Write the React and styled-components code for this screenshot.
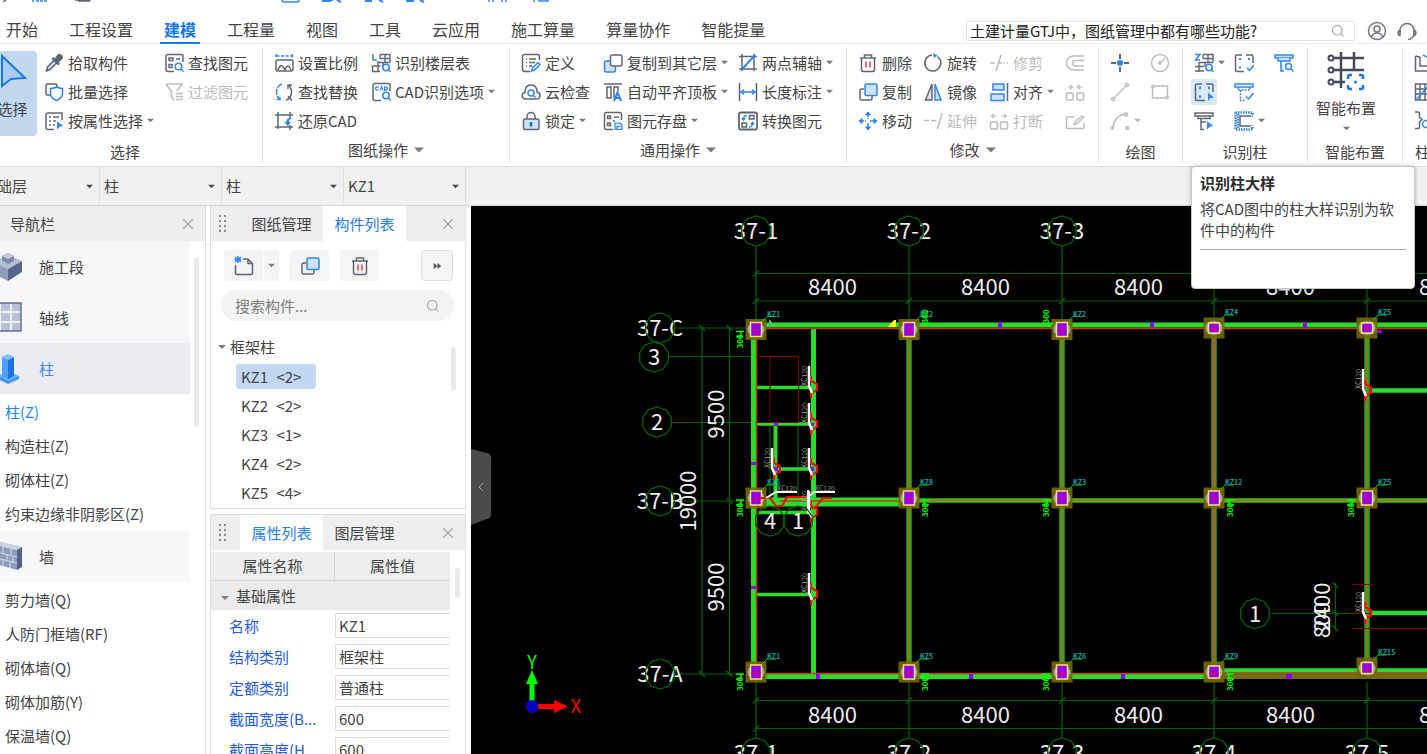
import React, { useState } from "react";
import styled, { createGlobalStyle } from "styled-components";

const GRAY = "#5d6675";
const BLUE = "#2f86f0";
const PALE = "#cfe1f8";
const OFF = "#bcbcbc";

const icons = {
  dropper: (
    <>
      <path d="M2.500 18l1-4 7-7 2.500 2.500-7 7z" fill="#cfe1f8" stroke={GRAY} />
      <path d="M8.500 5l6.500 6.500" stroke={GRAY} strokeWidth="2.500" />
      <path d="M11 7l3-4.500c1.500-2 5 1 3.500 3L13.500 9z" fill={GRAY} stroke={GRAY} strokeWidth="2" />
    </>
  ),
  batch: (
    <>
      <path d="M7 13H3.500A1.500 1.500 0 0 1 2 11.500v-8A1.500 1.500 0 0 1 3.500 2h8A1.500 1.500 0 0 1 13 3.500V5" stroke={GRAY} />
      <path d="M6.500 6.500c3 0 4-.5 6-1.500 2 1 3 1.500 6 1.500v5c0 3.500-2.500 5.500-6 7-3.500-1.500-6-3.500-6-7z" fill="#fff" stroke={BLUE} />
    </>
  ),
  byProp: (
    <>
      <path d="M10 18.500H4A2 2 0 0 1 2 16.500v-13A2 2 0 0 1 4 2h14v7" stroke={GRAY} />
      <path d="M5 6h2M9 6h6M5 10h2M9 10h3M5 14h2M9 14h2" stroke={GRAY} />
      <path d="M13 10.500l6.500 4.500-3.500.5-3 3z" fill={BLUE} />
    </>
  ),
  findEl: (
    <>
      <path d="M10 18.500H4A2 2 0 0 1 2 16.500v-13A2 2 0 0 1 4 1.500h13a2 2 0 0 1 2 2V9" stroke={GRAY} />
      <path d="M5 5h4v2.500H5zM5 11.500h3v3H5zM12 6h4" stroke={GRAY} />
      <circle cx="14.500" cy="13.500" r="3.300" stroke={BLUE} />
      <path d="M17 16l2.500 2.500" stroke={BLUE} />
    </>
  ),
  filter: (
    <>
      <path d="M2 2h16l-5.500 7M2 2l5.500 7.500v6L10 18" stroke={OFF} />
      <path d="M12 11.500h7M12 14.500h7M12 17.500h7" stroke={OFF} />
    </>
  ),
  scale: (
    <>
      <path d="M2 1v4M18.500 1v4M2.500 3h15.500" stroke={BLUE} strokeDasharray="3 1.500" />
      <rect x="2" y="7" width="17" height="11" rx="2" stroke={GRAY} />
      <path d="M4 17c1-3 2-4.500 3.500-4.500S9.500 15 11 17c1-3 1.500-4 3-4s2 2 3 4" stroke={GRAY} />
    </>
  ),
  replace: (
    <>
      <path d="M8 2C1.500 4 1 12 5 16.500M2.500 17.500H6V13.500" stroke={BLUE} strokeDasharray="6 1.200" />
      <path d="M12 18c6.500-2 7-10 3-14.500M18 3h-4v4M14 14l4 4.500" stroke={GRAY} />
    </>
  ),
  restore: (
    <>
      <path d="M1 4h18M4 1v17M16 1v7M1 16h18M16 14v5" stroke={GRAY} />
      <path d="M18 7c-5 0-6 2-5.500 4H10l4 4 3-4h-2c0-2 1-3 3-4z" fill={BLUE} />
    </>
  ),
  floorTable: (
    <>
      <path d="M2 1v6h4" stroke={BLUE} />
      <path d="M9 1.500h10v8M9 1.500v4M14 1.500v8M9 5.500h10M7 9.500h12M7 8v10.500M12 9.500v4M1.500 13h8M1.500 13v5.500H9" stroke={GRAY} strokeWidth="1.400" />
      <circle cx="15" cy="14.500" r="3.200" fill="#fff" stroke={BLUE} />
      <path d="M17.500 17l2 2" stroke={BLUE} />
    </>
  ),
  cadOpt: (
    <>
      <path d="M10 18.500H4A2 2 0 0 1 2 16.500v-13A2 2 0 0 1 4 1.500h14a1 1 0 0 1 1 1V9" stroke={GRAY} />
      <path d="M7.500 5.500C6 4.500 4.500 5 4.500 6.500S6 8.500 7.500 7.500M9 8.500l1.500-4 1.500 4M13.500 4.800v3.500c2.500 0 3-.5 3-1.700s-.5-1.800-3-1.800z" stroke={BLUE} strokeWidth="1.200" />
      <circle cx="15" cy="13.500" r="3.200" stroke={BLUE} />
      <path d="M17.500 16l2 2.500" stroke={BLUE} />
    </>
  ),
  define: (
    <>
      <path d="M9 18.500H3.500a2 2 0 0 1-2-2v-13a2 2 0 0 1 2-2h13a2 2 0 0 1 2 2V7" stroke={GRAY} />
      <path d="M5 6h1M8 6h7M5 9.500h1M8 9.500h6M5 13h1M8 13h3" stroke={GRAY} />
      <path d="M10.500 18l1-3 5.500-5.500 2 2-5.500 5.500z" fill="#fff" stroke={BLUE} />
    </>
  ),
  cloud: (
    <>
      <path d="M4.500 17C.5 17 0 11 4 10.500 4 5 6.500 3 10 3s6 2.500 6 7c4 .5 4 7-.5 7z" stroke={GRAY} />
      <circle cx="10" cy="11" r="3" stroke={BLUE} />
      <path d="M12 13l2.500 2.500" stroke={BLUE} />
    </>
  ),
  lock: (
    <>
      <path d="M6 8V5.500a4 4 0 0 1 8 0V8" stroke={GRAY} />
      <rect x="2.500" y="8" width="15.500" height="10.500" rx="1.500" fill={PALE} stroke={GRAY} />
      <path d="M10 11v4.500" stroke="#1469d8" strokeWidth="2.500" />
    </>
  ),
  copyLayer: (
    <>
      <rect x="1.500" y="8" width="11" height="11" rx="2" fill={PALE} stroke={BLUE} />
      <rect x="7.500" y="2" width="11.500" height="11" rx="2" fill="#fff" stroke={GRAY} />
    </>
  ),
  alignTop: (
    <>
      <path d="M1 2h18M4 5h4v11H4zM11 16V5h4v4" stroke={GRAY} />
      <path d="M11 19l3.500-8.500L18 19M12.500 16h4" stroke={BLUE} strokeWidth="2" />
    </>
  ),
  saveEl: (
    <>
      <path d="M10 18.500H3.500a2 2 0 0 1-2-2v-13a2 2 0 0 1 2-2h13a2 2 0 0 1 2 2V9" stroke={GRAY} />
      <path d="M4.500 5h3v2.500h-3zM4.500 12h3v2.500h-3zM11 6h5M10 10h2" stroke={GRAY} />
      <path d="M12 12h5l2 2v4.500h-7zM14 18v-2.500h3" fill={PALE} stroke={BLUE} strokeWidth="1.200" />
    </>
  ),
  twoPoint: (
    <>
      <path d="M1 3.500h18M4 1v17M16 1v17M1 16h18" stroke={GRAY} />
      <path d="M3 17.500L17 2" stroke={BLUE} strokeWidth="2" />
    </>
  ),
  length: (
    <>
      <path d="M1.500 1v18M18.500 1v18" stroke={GRAY} />
      <path d="M3.500 10h13M6 7.500L3 10l3 2.500M14 7.500l3 2.500-3 2.500" stroke={BLUE} />
    </>
  ),
  convert: (
    <>
      <rect x="1" y="1.500" width="18" height="17" rx="1.500" stroke={GRAY} strokeWidth="1.800" />
      <path d="M11.500 4.500H16V8h-4.500zM4 12h4.500v4H4z" stroke={GRAY} />
      <path d="M9 4.500c-3 0-3.500 1-3.500 4M3.800 7l1.700 2 1.700-2M11 16c3 0 3.500-1 3.500-4M12.800 13.500l1.700-2 1.700 2" stroke={BLUE} />
    </>
  ),
  trash: (
    <>
      <path d="M2 5h16M6.500 5V2h7v3M3.500 5v11.500a2 2 0 0 0 2 2h9a2 2 0 0 0 2-2V5" stroke={GRAY} />
      <path d="M8 8.500v6M12 8.500v6" stroke="#e23c3c" />
    </>
  ),
  copy: (
    <>
      <path d="M6 7H3.500A1.500 1.500 0 0 0 2 8.500v8A1.500 1.500 0 0 0 3.500 18h9a1.500 1.500 0 0 0 1.500-1.500V14" stroke={GRAY} />
      <rect x="7" y="2" width="12" height="11.500" rx="1.500" fill={PALE} stroke={BLUE} />
    </>
  ),
  move: (
    <g stroke={BLUE}>
      <path d="M10 2v6M10 12v6M2 10h6M12 10h6" strokeDasharray="4 1" />
      <path d="M7.500 4L10 1l2.500 3zM7.500 16l2.500 3 2.500-3zM4 7.500L1 10l3 2.500zM16 7.500l3 2.500-3 2.500z" fill={BLUE} strokeWidth="1" />
    </g>
  ),
  rotate: (
    <>
      <path d="M14.500 3.500A8 8 0 1 1 9 2" stroke={GRAY} />
      <path d="M10 0l4.500 2.500L11 5z" fill={BLUE} />
    </>
  ),
  mirror: (
    <>
      <path d="M9 2v16H2.500z" fill="#dfe2e6" stroke={GRAY} />
      <path d="M12 2v16h6z" fill={PALE} stroke={BLUE} />
    </>
  ),
  extend: <path d="M1 9.500h5M8 9.500h5M14.500 18L19 2" stroke={OFF} />,
  trim: <path d="M1 10h5M7 18l5-16M10 10h3M14.500 10h1.500M17.500 10h1.500" stroke={OFF} />,
  align: (
    <>
      <rect x="4" y="2" width="11" height="6" fill={PALE} stroke={BLUE} />
      <rect x="2" y="12" width="13" height="6.500" fill={PALE} stroke={BLUE} />
      <path d="M18.500 1v18" stroke={GRAY} />
    </>
  ),
  breakIt: (
    <g stroke={OFF}>
      <rect x="1.500" y="11" width="7" height="7" rx="1" />
      <rect x="11.500" y="11" width="7" height="7" rx="1" />
      <path d="M3 5h5M5 3L2.500 5 5 7M12 5h5M15 3l2.500 2L15 7" strokeWidth="1.200" />
    </g>
  ),
  offset: <path d="M19 3H8.500a7 7 0 0 0 0 14H19M19 7.500H9.500a3 3 0 0 0 0 5.500H19" stroke={OFF} />,
  merge: (
    <g stroke={OFF}>
      <rect x="1.500" y="11" width="6.500" height="7" rx="1" />
      <rect x="12" y="11" width="6.500" height="7" rx="1" />
      <path d="M2 5h5M5 3l2.500 2L5 7M18 5h-5M15 3l-2.500 2L15 7" strokeWidth="1.200" />
    </g>
  ),
  edit: (
    <g stroke={OFF}>
      <path d="M9 6H2.500a1 1 0 0 0-1 1v9.500a1 1 0 0 0 1 1H18a1 1 0 0 0 1-1V12" />
      <path d="M9 13.500l1.500-3L17 5l1.500 1.500-6.500 6z" />
    </g>
  ),
  point: (
    <>
      <path d="M10 1v5M10 14v5M1 10h5M14 10h5" stroke={GRAY} strokeWidth="2" />
      <circle cx="10" cy="10" r="3" fill={BLUE} />
    </>
  ),
  line: (
    <g stroke={OFF}>
      <path d="M3.500 16.500L16 4" />
      <circle cx="3" cy="17" r="1.500" />
      <circle cx="17" cy="3" r="1.500" />
    </g>
  ),
  arc: (
    <g stroke={OFF}>
      <path d="M2.500 17C4 9 8 4 15 3" />
      <circle cx="2.500" cy="17" r="1" />
      <circle cx="16" cy="3.500" r="1.500" />
      <circle cx="17" cy="17" r="1.500" />
    </g>
  ),
  circle: (
    <g stroke={OFF}>
      <circle cx="10" cy="10" r="8.500" />
      <circle cx="10" cy="10" r="1.200" />
      <path d="M11 9l4-4" />
    </g>
  ),
  rect: (
    <g stroke={OFF}>
      <rect x="2.500" y="4" width="15" height="12" />
      <circle cx="3" cy="4.500" r="1.200" fill="#fff" />
      <circle cx="17" cy="15.500" r="1.200" fill="#fff" />
    </g>
  ),
  idColumn: (
    <>
      <path d="M1 1.500h5L1.500 7H6" stroke={BLUE} />
      <path d="M9 1.500h10v8M9 1.500v4M14 1.500v8M9 5.500h10M5 9.500h14M5 9v10M11 9.500v4M1 13.500h9M1 18h9" stroke={GRAY} strokeWidth="1.400" />
      <circle cx="15" cy="14.500" r="3.200" fill="#fff" stroke={BLUE} />
      <path d="M17.500 17l2 2" stroke={BLUE} />
    </>
  ),
  detail: (
    <>
      <path d="M8 2H3a1.500 1.500 0 0 0-1.500 1.500V17A1.500 1.500 0 0 0 3 18.500h8M12 2h5.500A1.500 1.500 0 0 1 19 3.500V10" stroke={GRAY} />
      <path d="M5 6h2M14 6h2M5 14.500h2" stroke={BLUE} strokeWidth="2.500" />
      <path d="M14 10.500l6 5-3.500.500-2.500 3z" fill={BLUE} />
    </>
  ),
  frameColumn: (
    <>
      <path d="M1 2h18v3H1zM4 5v2.500h12V5M7 8v10.500h3M7 11h5" stroke={GRAY} />
      <path d="M13 10l6.500 5-3.500.5-3 3z" fill={BLUE} />
    </>
  ),
  checkBox: (
    <>
      <path d="M8 2H3a1.500 1.500 0 0 0-1.500 1.500V17A1.500 1.500 0 0 0 3 18.500h7M12 2h5.500A1.500 1.500 0 0 1 19 3.500V10" stroke={GRAY} />
      <path d="M5 6h2M14 6h2M5 14.500h2" stroke={BLUE} strokeWidth="2" />
      <path d="M13 15l2.500 2.500L20 12" stroke={BLUE} />
    </>
  ),
  checkColumn: (
    <>
      <path d="M1 2h18v3H1z" stroke={BLUE} />
      <path d="M4 5v3h12V5M6.500 8v10.500h4" stroke={BLUE} strokeDasharray="2 1.200" />
      <path d="M12 14.500l2.500 2.500 5-6" stroke={BLUE} />
    </>
  ),
  contour: (
    <>
      <path d="M1.500 1.500h17v4M1.500 1.500v17h17v-4M4 3v14" stroke={BLUE} strokeWidth="2.500" strokeDasharray="1.500 1" />
      <path d="M17 5H6v10h11" stroke={GRAY} />
    </>
  ),
  findColumn: (
    <>
      <path d="M1 2h18v3H1z" fill={PALE} stroke={BLUE} />
      <path d="M4 5v3h12V5M7 8v10h3" fill={PALE} stroke={BLUE} />
      <circle cx="14.500" cy="13.500" r="3" fill="#fff" stroke={BLUE} />
      <path d="M17 16l2.500 2.500" stroke={BLUE} />
    </>
  ),
  poly: (
    <>
      <path d="M1.500 3v15h17M6 4v9h13M1.500 3L6 4" stroke={GRAY} />
      <path d="M9 2l8 4" stroke={BLUE} />
    </>
  ),
  hatch: (
    <>
      <path d="M1.500 2h17v16h-17zM6 2v16M11 2v16M1.500 7h17M1.500 12h17M16 2v16" stroke={GRAY} />
      <path d="M3 17L15 3" stroke={BLUE} />
    </>
  ),
  brace: (
    <>
      <path d="M1 1h3a1.500 1.500 0 0 1 1.500 1.500V6L8 8.500 5.500 11v5A1.500 1.500 0 0 1 4 17.500H1" stroke={GRAY} />
      <circle cx="12" cy="13" r="3.500" stroke={BLUE} />
    </>
  ),
  newFile: (
    <>
      <path d="M9 3h5l4.500 4.500V17a1.500 1.500 0 0 1-1.500 1.500H3A1.500 1.500 0 0 1 1.500 17V9M14 3v4.500h4" stroke={GRAY} />
      <path d="M1 1l6 5M7 1L1 6M4 0v7M.5 3.500h7" stroke={BLUE} />
    </>
  ),
  user: (
    <g stroke="#70757f">
      <circle cx="10" cy="10" r="8.500" />
      <circle cx="10" cy="8" r="3" />
      <path d="M4.500 16c1-3 3-4 5.500-4s4.500 1 5.500 4" />
    </g>
  ),
  headset: (
    <g stroke="#70757f">
      <path d="M3 12V9.500a7 7 0 0 1 14 0V12c0 4-2 6-6 6.500" />
      <path d="M3 9.500c-2.500 0-2.500 5 0 5zM17 9.500c2.500 0 2.500 5 0 5z" />
    </g>
  ),
  search: (
    <g stroke="#a9a9a9">
      <circle cx="9" cy="9" r="6" />
      <path d="M13.500 13.500L17 17" />
    </g>
  ),
  close: <path d="M4 4l12 12M16 4L4 16" stroke="#9a9a9a" />,
};

const Icon = ({ name, size = 20 }) => (
  <IconSvg width={size} height={size} viewBox="0 0 20 20" fill="none" strokeWidth="1.500" aria-hidden="true">
    {icons[name]}
  </IconSvg>
);

const Caret = ({ size = 7, color = "#7b7b7b" }) => (
  <IconSvg width={size} height={size} viewBox="0 0 8 8" aria-hidden="true">
    <path d="M0 2h8L4 6z" fill={color} />
  </IconSvg>
);

const Tool = ({ icon, label, menu, off, title }) => (
  <ToolButton disabled={off} aria-label={label ? undefined : title}>
    <Icon name={icon} />
    {label}
    {menu && <Caret color={off ? "#b5b5b5" : undefined} />}
  </ToolButton>
);

const tabs = ["开始", "工程设置", "建模", "工程量", "视图", "工具", "云应用", "施工算量", "算量协作", "智能提量"];

const navTop = [
  { label: "施工段", art: "block" },
  { label: "轴线", art: "grid" },
  { label: "柱", art: "column", active: true },
];
const columnItems = ["柱(Z)", "构造柱(Z)", "砌体柱(Z)", "约束边缘非阴影区(Z)"];
const wallItems = ["剪力墙(Q)", "人防门框墙(RF)", "砌体墙(Q)", "砌体加筋(Y)", "保温墙(Q)"];

const members = [
  ["KZ1", 2],
  ["KZ2", 2],
  ["KZ3", 1],
  ["KZ4", 2],
  ["KZ5", 4],
];

const props = [
  ["名称", "KZ1"],
  ["结构类别", "框架柱"],
  ["定额类别", "普通柱"],
  ["截面宽度(B...", "600"],
  ["截面高度(H...", "600"],
];

const art = {
  block: (
    <>
      <path d="M-6 12l14-7 14 6-14 8z" fill="#b5bfd3" />
      <path d="M-6 12l14 7v12L-6 24z" fill="#8f9dbb" />
      <path d="M8 19l14-8v11L8 31z" fill="#56668c" />
      <path d="M2 6l6-3 6 3v5l-6 3-6-3z" fill="#7c8bad" />
      <path d="M2 6l6-3 6 3-6 3z" fill="#c5cddd" />
    </>
  ),
  grid: (
    <>
      <path d="M-8 2h29v28H-8z" fill="#b7c0d4" />
      <path d="M0 2v28M11 2v28M-8 11h29M-8 21h29" stroke="#fff" strokeWidth="1.500" />
      <path d="M-8 2h29v28H-8" stroke="#5f7096" strokeWidth="1.500" fill="none" />
    </>
  ),
  column: (
    <>
      <path d="M-2 24l10-5 11 5-11 6z" fill="#67b3ff" />
      <path d="M-2 24l10 5v3l-10-5zM8 29l11-5v3L8 32z" fill="#3f90ef" />
      <path d="M2 5l6-3 6 3-6 3z" fill="#7dc0ff" />
      <path d="M2 5l6 3v19l-6-3z" fill="#4aa0fa" />
      <path d="M8 8l6-3v19l-6 3z" fill="#1f6fe0" />
    </>
  ),
  wall: (
    <>
      <path d="M-8 4l6-3 24 6-4 3z" fill="#c9d0df" />
      <path d="M-8 4l25 6v20l-25-7z" fill="#8e9dbd" />
      <path d="M17 10l5-3v20l-5 3z" fill="#50618a" />
      <path d="M-8 11l25 6M-8 17l25 6M3 7v6M11 9v7M-1 13v7M7 15v6M13 17v6M3 20v6M10 22v6" stroke="#d5dbe8" />
    </>
  ),
};

const NavArt = ({ name }) => (
  <IconSvg width="24" height="34" viewBox="0 0 24 34" aria-hidden="true">
    {art[name]}
  </IconSvg>
);

/* ---- plan drawing ---- */

const axisX = [756, 909, 1062, 1214, 1367];
const DIM = "#006400";
const BEAM = "#2bdc2b";

const Bubble = ({ x, y, label }) => {
  const pts = Array.from({ length: 10 }, (_, i) => {
    const a = (i * Math.PI) / 5 - Math.PI / 2;
    return `${(x + 15 * Math.cos(a)).toFixed(1)},${(y + 15 * Math.sin(a)).toFixed(1)}`;
  }).join(" ");
  return (
    <>
      <text x={x} y={y + 8} textAnchor="middle" fontSize="22" fill="#eee">
        {label}
      </text>
      <polygon points={pts} fill="none" stroke={DIM} strokeWidth="1.300" />
    </>
  );
};

const DimText = ({ x, y, up, children }) => (
  <text
    x={x}
    y={y + 7.500}
    textAnchor="middle"
    fontSize="22"
    fill="#eee"
    transform={up ? `rotate(-90 ${x} ${y})` : undefined}
  >
    {children}
  </text>
);

const Tick = ({ x, y }) => <path d={`M${x - 3} ${y + 3}l6-6`} stroke={DIM} strokeWidth="1.500" />;

/* side: -1 puts the offset note on the left, 1 on the right, 0 leaves it out */
const ColumnMark = ({ x, y, h = 14, tag, side = 0, above }) => {
  const noteX = x + side * 16 + 3;
  const noteY = above ? y - 6 : y + 19;
  return (
    <>
      <rect x={x - 10.500} y={y - 10.500} width="21" height="21" fill="#756800" opacity="0.9" />
      <ellipse cx={x} cy={y} rx="8.500" ry="7" fill="#8fb39a" />
      <rect x={x - 5.500} y={y - h / 2} width="11" height={h} fill="#8b00ff" stroke="#f3e27a" strokeWidth="1.500" />
      <path d={`M${x} ${y - h / 2 + 1}v${h - 2}`} stroke="#d0008a" strokeWidth="1.500" />
      <path d={`M${x - 5} ${y + 1}h10`} stroke="#e00050" />
      <path d={`M${x + 6} ${y - 8}l5-5h9`} stroke="#00d000" fill="none" />
      <text x={x + 11} y={y - 13} fontSize="7" fill="#0aa0a0" fontWeight="700">
        {tag}
      </text>
      {side !== 0 && (
        <>
          <path
            d={above ? `M${noteX - 4} ${y - 6}h8` : `M${x + side * 20} ${y + 2}h${side * -8}M${x + side * 15} ${y + 2}v5h${side * 5}`}
            stroke="#00ff00"
            strokeWidth="1.500"
            fill="none"
          />
          <text x={noteX} y={noteY} fontSize="8" fill="#00ff00" fontWeight="700" transform={`rotate(-90 ${noteX} ${noteY})`}>
            300
          </text>
        </>
      )}
    </>
  );
};

const Steel = ({ x, y }) => (
  <>
    <text x={x - 4} y={y - 1} fontSize="7" fill="#999" transform={`rotate(-90 ${x - 4} ${y - 1})`}>
      XC120
    </text>
    <path d={`M${x} ${y - 11}v5l6 3v6l-6 3v5`} fill="none" stroke="#f00" strokeWidth="2" />
    <path d={`M${x - 2} ${y - 21}v20l3 7`} fill="none" stroke="#fff" strokeWidth="2.500" />
  </>
);

const topMarks = [
  { tag: "KZ1", side: -1 },
  { tag: "KZ2", side: 1, above: true },
  { tag: "KZ2", side: -1, above: true },
  { tag: "KZ4", h: 10 },
  { tag: "KZ5", h: 10 },
];
const midMarks = [
  { tag: "KZ6", side: -1 },
  { tag: "KZ8", side: 1 },
  { tag: "KZ3", side: -1 },
  { tag: "KZ12", side: 1 },
  { tag: "KZ5", side: -1 },
];
const bottomMarks = [
  { tag: "KZ1", side: -1, y: 672 },
  { tag: "KZ5", side: 1, y: 672 },
  { tag: "KZ6", side: -1, y: 672 },
  { tag: "KZ9", side: 1, y: 672, h: 12 },
  { tag: "KZ15", y: 668, h: 11 },
];

const Plan = () => (
  <PlanSvg viewBox="471 206 956 548" preserveAspectRatio="xMinYMin slice" role="img" aria-label="柱平面图">
    <g stroke={DIM} strokeWidth="1.200" fill="none">
      <path d="M756 273.500H1427M756 301H1427M756 700.500H1427M756 728.500H1427" />
      <path d="M702 328v346M729.500 328v346M675 328h75M669 356.500h87M672 422.500h84M675 501h75M675 674h62" />
      <path d="M770 422v84M798 422v84M1271 613.500h82M1335.500 583v47" />
      {axisX.map((x) => (
        <path key={x} d={`M${x} 246v74M${x} 682v56`} />
      ))}
    </g>
    {axisX.map((x) => (
      <g key={x}>
        <Tick x={x} y={301} />
        <Tick x={x} y={700.500} />
      </g>
    ))}
    <Tick x={756} y={273.500} />
    <Tick x={756} y={728.500} />
    {[328, 501, 674].map((y) => (
      <path key={y} d={`M726.500 ${y - 3}l6 6`} stroke={DIM} strokeWidth="1.500" />
    ))}
    {[328, 674].map((y) => (
      <path key={y} d={`M699 ${y - 3}l6 6`} stroke={DIM} strokeWidth="1.500" />
    ))}
    {[585, 613, 628].map((y) => (
      <path key={y} d={`M1332 ${y - 3}l6 6`} stroke={DIM} strokeWidth="1.500" />
    ))}

    {/* bays */}
    {axisX.slice(1).map((x) => (
      <g key={x}>
        <path d={`M${x} 335v335`} stroke="#22a822" strokeWidth="5.500" />
        <path d={`M${x} 335v335`} stroke={x === 1214 ? "#c8502a" : "#8a7a22"} strokeWidth="2.500" />
      </g>
    ))}
    <path d="M915 500.500h512" stroke="#1ec81e" strokeWidth="4.500" />
    <path d="M915 500.500h512" stroke="#a07a20" strokeWidth="2" />

    <g stroke={BEAM}>
      <path d="M765 325h662" strokeWidth="5" />
      <path d="M753.500 338v336M813.500 329v345" strokeWidth="5" />
      <path d="M757 387.500h54M757 424h54M776 469h35M758 512.500h53M757 594.500h54" strokeWidth="3.500" />
      <path d="M775.500 424v74" strokeWidth="4" />
      <path d="M760 502h142" strokeWidth="9" />
      <path d="M765 676.500h449" strokeWidth="5" />
      <path d="M1222 670.500h205M1371 390.500h56M1371 613h56" strokeWidth="4.500" />
    </g>
    <path d="M1220 676.500h207" stroke="#716b18" strokeWidth="5" />
    <path d="M756.500 338v330M765 328.500h662M780 501h122M765 673.500h662" stroke="#c23a14" strokeWidth="1.500" />
    <path d="M756 356.500h42.500v66H756M770 356.500v66M1352 584.500h21M1352 613.500h18M1352 628.500h75" stroke="#7a0000" fill="none" />
    <path d="M888 327l6-7h2v7z" fill="#ff0" />
    <path d="M769 326v-7l6 7z" fill="#4fc76b" />

    <g fill="#8b00ff">
      {[1000, 1152, 1305].map((x) => (
        <rect key={x} x={x - 2} y="322.500" width="4" height="5" />
      ))}
      {[818, 971, 1123].map((x) => (
        <rect key={x} x={x - 2} y="674" width="4" height="5" />
      ))}
      <rect x="1286" y="674" width="6" height="5" />
      <rect x="751" y="462" width="5" height="3" />
      <rect x="751" y="586" width="5" height="3" />
      <rect x="774" y="423" width="4" height="3" />
      <rect x="1377" y="330" width="5" height="3" />
      <rect x="810" y="423" width="4" height="3" />
      <rect x="810" y="467" width="4" height="4" />
      <rect x="774" y="467" width="4" height="4" />
    </g>

    {axisX.map((x, i) => (
      <g key={x}>
        <ColumnMark x={x} y={i > 2 ? 328 : 329.500} {...topMarks[i]} />
        <ColumnMark x={x} y={498} {...midMarks[i]} />
        <ColumnMark x={x} {...bottomMarks[i]} />
      </g>
    ))}

    <path d="M760 498h10l6 8h6l5-9h23M810 507l5 1 8-10h9" fill="none" stroke="#f00" strokeWidth="2" />
    <path d="M766 498l10-6h21M807 498l7-6h21M808 490v24" fill="none" stroke="#fff" strokeWidth="2" />
    <text x="777" y="491" fontSize="7" fill="#999">
      XC120
    </text>
    <text x="815" y="491" fontSize="7" fill="#999">
      XC120
    </text>
    {[
      [811, 387],
      [811, 424],
      [811, 469],
      [774, 469],
      [811, 594],
      [811, 512],
      [1365, 390],
      [1365, 613],
    ].map(([x, y]) => (
      <Steel key={`${x}-${y}`} x={x} y={y} />
    ))}

    {axisX.map((x, i) => (
      <g key={x}>
        {i < 3 && <Bubble x={x} y={231} label={`37-${i + 1}`} />}
        <Bubble x={x} y={753} label={`37-${i + 1}`} />
        <DimText x={x + 76.500} y={287}>
          8400
        </DimText>
        <DimText x={x + 76.500} y={715}>
          8400
        </DimText>
      </g>
    ))}
    <Bubble x={660} y={328} label="37-C" />
    <Bubble x={660} y={501} label="37-B" />
    <Bubble x={660} y={674} label="37-A" />
    <Bubble x={654} y={357} label="3" />
    <Bubble x={657} y={422} label="2" />
    <Bubble x={770} y={521} label="4" />
    <Bubble x={798} y={521} label="1" />
    <Bubble x={1255} y={613.500} label="1" />
    <DimText x={716} y={414} up>
      9500
    </DimText>
    <DimText x={688} y={501} up>
      19000
    </DimText>
    <DimText x={716} y={587} up>
      9500
    </DimText>
    <DimText x={1322} y={607} up>
      2400
    </DimText>
    <DimText x={1322} y={620} up>
      800
    </DimText>

    {/* world axes */}
    <path d="M532 706V682" stroke="#0f0" strokeWidth="5" />
    <path d="M526 684l6-14 6 14z" fill="#0f0" />
    <path d="M538 706.500h18" stroke="#f00" strokeWidth="5" />
    <path d="M554 700l14 6.500-14 6.500z" fill="#f00" />
    <circle cx="532" cy="706.500" r="6.500" fill="#0000c0" />
    <text x="532" y="669" fontSize="18" fill="#0f0" textAnchor="middle">
      Y
    </text>
    <text x="576" y="713" fontSize="18" fill="#f00" textAnchor="middle">
      X
    </text>
  </PlanSvg>
);

const App = () => {
  const [tab, setTab] = useState("建模");
  const [member, setMember] = useState("KZ1");

  return (
    <Page>
      <GlobalStyle />
      <QuickStrip>
        <svg width="560" height="4" viewBox="0 0 560 4" fill="none" strokeWidth="1.500" aria-hidden="true">
          <path d="M3 2l3-2" stroke={GRAY} />
          <path d="M33 0v2M36 1h12" stroke={BLUE} strokeDasharray="3 1" />
          <path d="M75 0h16M78 1h12" stroke={GRAY} />
          <path d="M282 0c0 2 1 2 2 2h13c1 0 2 0 2-2" stroke={BLUE} />
          <path d="M323 0v1h8M332 0v1M337 0l4 2M365 1h7M379 0l4 2M406 1h8M420 0l4 2" stroke={BLUE} strokeWidth="2" />
          <path d="M489 0v2M493 0v2M502 0v2M506 0v2M534 0v2M539 0v1h9V0" stroke={BLUE} />
        </svg>
      </QuickStrip>

      <TabRow>
        <TabList>
          {tabs.map((t) => (
            <TabButton key={t} $active={t === tab} onClick={() => setTab(t)}>
              {t}
            </TabButton>
          ))}
        </TabList>
        <TopTools>
          <HelpSearch>
            <input aria-label="搜索" defaultValue="土建计量GTJ中，图纸管理中都有哪些功能?" />
            <Icon name="search" size={16} />
          </HelpSearch>
          <PlainButton aria-label="用户">
            <Icon name="user" />
          </PlainButton>
          <PlainButton aria-label="客服">
            <Icon name="headset" />
          </PlainButton>
        </TopTools>
      </TabRow>

      <Ribbon>
        <FirstGroup>
          <GroupRow>
            <SelectButton>
              <svg width="32" height="36" viewBox="0 0 32 36" aria-hidden="true">
                <path d="M5 4l23 22-14 1-9 7z" fill="#a9cdf6" stroke="#1677f0" strokeWidth="2" />
              </svg>
              选择
            </SelectButton>
            <ToolGrid $cols="120px 98px">
              <Tool icon="dropper" label="拾取构件" />
              <Tool icon="batch" label="批量选择" />
              <Tool icon="byProp" label="按属性选择" menu />
              <Tool icon="findEl" label="查找图元" />
              <Tool icon="filter" label="过滤图元" off />
            </ToolGrid>
          </GroupRow>
          <GroupLabel>选择</GroupLabel>
        </FirstGroup>
        <Group>
          <ToolGrid $cols="97px 138px">
            <Tool icon="scale" label="设置比例" />
            <Tool icon="replace" label="查找替换" />
            <Tool icon="restore" label="还原CAD" />
            <Tool icon="floorTable" label="识别楼层表" />
            <Tool icon="cadOpt" label="CAD识别选项" menu />
          </ToolGrid>
          <GroupLabel $menu>
            图纸操作 <Caret size={10} />
          </GroupLabel>
        </Group>
        <Group>
          <ToolGrid $cols="82px 135px 108px">
            <Tool icon="define" label="定义" />
            <Tool icon="cloud" label="云检查" />
            <Tool icon="lock" label="锁定" menu />
            <Tool icon="copyLayer" label="复制到其它层" menu />
            <Tool icon="alignTop" label="自动平齐顶板" menu />
            <Tool icon="saveEl" label="图元存盘" menu />
            <Tool icon="twoPoint" label="两点辅轴" menu />
            <Tool icon="length" label="长度标注" menu />
            <Tool icon="convert" label="转换图元" />
          </ToolGrid>
          <GroupLabel $menu>
            通用操作 <Caret size={10} />
          </GroupLabel>
        </Group>
        <Group>
          <ToolGrid $cols="65px 66px 76px 33px">
            <Tool icon="trash" label="删除" />
            <Tool icon="copy" label="复制" />
            <Tool icon="move" label="移动" />
            <Tool icon="rotate" label="旋转" />
            <Tool icon="mirror" label="镜像" />
            <Tool icon="extend" label="延伸" off />
            <Tool icon="trim" label="修剪" off />
            <Tool icon="align" label="对齐" menu />
            <Tool icon="breakIt" label="打断" off />
            <Tool icon="offset" title="偏移" off />
            <Tool icon="merge" title="合并" off />
            <Tool icon="edit" title="编辑" off />
          </ToolGrid>
          <GroupLabel $menu>
            修改 <Caret size={10} />
          </GroupLabel>
        </Group>
        <Group>
          <ToolGrid $cols="40px 32px">
            <Tool icon="point" title="点" />
            <Tool icon="line" title="直线" off />
            <Tool icon="arc" title="弧" menu off />
            <Tool icon="circle" title="圆" off />
            <Tool icon="rect" title="矩形" off />
          </ToolGrid>
          <GroupLabel>绘图</GroupLabel>
        </Group>
        <Group>
          <ToolGrid $cols="40px 40px 33px">
            <Tool icon="idColumn" title="识别柱表" menu />
            <TipAnchor>
              <HoverButton aria-label="识别柱大样" aria-describedby="tip">
                <Icon name="detail" />
              </HoverButton>
              <Tooltip id="tip" role="tooltip">
                <strong>识别柱大样</strong>
                <p>将CAD图中的柱大样识别为软件中的构件</p>
              </Tooltip>
            </TipAnchor>
            <Tool icon="frameColumn" title="识别柱" />
            <Tool icon="checkBox" title="校核柱大样" />
            <Tool icon="checkColumn" title="校核柱图元" />
            <Tool icon="contour" title="轮廓" menu />
            <Tool icon="findColumn" title="查找柱" />
          </ToolGrid>
          <GroupLabel>识别柱</GroupLabel>
        </Group>
        <Group>
          <LayoutButton>
            <svg width="40" height="40" viewBox="0 0 40 40" fill="none" strokeWidth="2.500" aria-hidden="true">
              <path d="M7 7h31M7 19h31M7 31h12M15 1v36M28 1v17" stroke="#414b5c" />
              <g fill="#fff" stroke="#414b5c" strokeWidth="2">
                <circle cx="5" cy="7" r="2.500" />
                <circle cx="5" cy="19" r="2.500" />
                <circle cx="5" cy="31" r="2.500" />
              </g>
              <path d="M22 28v-2a2 2 0 0 1 2-2h2M33 24h2a2 2 0 0 1 2 2v2M37 34v2a2 2 0 0 1-2 2h-2M26 38h-2a2 2 0 0 1-2-2v-2" stroke="#1677f0" />
              <circle cx="29.500" cy="31" r="1.500" fill="#1677f0" />
            </svg>
            智能布置
            <Caret />
          </LayoutButton>
          <GroupLabel>智能布置</GroupLabel>
        </Group>
        <Group>
          <ToolGrid $cols="88px">
            <Tool icon="poly" title="偏心" />
            <Tool icon="hatch" title="填充" />
            <Tool icon="brace" title="查改标注" />
          </ToolGrid>
          <GroupLabel>柱二次编辑</GroupLabel>
        </Group>
      </Ribbon>

      <SelectorBar>
        {[
          ["楼层", "基础层"],
          ["构件大类", "柱"],
          ["构件类型", "柱"],
          ["构件", "KZ1"],
        ].map(([name, value]) => (
          <SelectBox key={name}>
            <select aria-label={name}>
              <option>{value}</option>
            </select>
            <Caret color="#4a4a4a" />
          </SelectBox>
        ))}
      </SelectorBar>

      <Main>
        <NavPanel>
          <PanelHeader>
            <NavTitle>导航栏</NavTitle>
            <CloseButton aria-label="关闭">
              <Icon name="close" size={16} />
            </CloseButton>
          </PanelHeader>
          <NavBody>
            <NavList>
              {navTop.map((n) => (
                <NavItem key={n.label} $active={n.active}>
                  <NavArt name={n.art} />
                  {n.label}
                </NavItem>
              ))}
              <SubList>
                {columnItems.map((c, i) => (
                  <SubItem key={c} href="#" $active={i === 0}>
                    {c}
                  </SubItem>
                ))}
              </SubList>
              <NavItem>
                <NavArt name="wall" />墙
              </NavItem>
              <SubList>
                {wallItems.map((c) => (
                  <SubItem key={c} href="#">
                    {c}
                  </SubItem>
                ))}
              </SubList>
            </NavList>
            <Thumb $top={16} $height={170} />
          </NavBody>
        </NavPanel>

        <SideColumn>
          <MemberPanel>
            <PanelHeader>
              <Grip />
              <PanelTab>图纸管理</PanelTab>
              <PanelTab $active>构件列表</PanelTab>
              <CloseButton aria-label="关闭">
                <Icon name="close" size={16} />
              </CloseButton>
            </PanelHeader>
            <ActionRow>
              <SplitButton>
                <ActionButton aria-label="新建">
                  <Icon name="newFile" />
                </ActionButton>
                <ArrowButton aria-label="新建选项">
                  <Caret />
                </ArrowButton>
              </SplitButton>
              <ActionButton aria-label="复制">
                <Icon name="copy" />
              </ActionButton>
              <ActionButton aria-label="删除">
                <Icon name="trash" />
              </ActionButton>
              <MoreButton aria-label="更多">
                <svg width="9" height="6" viewBox="0 0 10 8" aria-hidden="true">
                  <path d="M0 0l5 4-5 4zM5 0l5 4-5 4z" fill="#555" />
                </svg>
              </MoreButton>
            </ActionRow>
            <MemberSearch>
              <input aria-label="搜索构件" placeholder="搜索构件..." />
              <Icon name="search" size={16} />
            </MemberSearch>
            <Tree>
              <TreeBody>
                <TreeHead>
                  <Caret size={8} />
                  框架柱
                </TreeHead>
                {members.map(([name, count]) => (
                  <TreeItem key={name} $active={name === member} onClick={() => setMember(name)}>
                    {name} <span>&lt;{count}&gt;</span>
                  </TreeItem>
                ))}
              </TreeBody>
              <Thumb $top={14} $height={44} />
            </Tree>
          </MemberPanel>

          <PropPanel>
            <PanelHeader>
              <Grip />
              <PanelTab $active>属性列表</PanelTab>
              <PanelTab>图层管理</PanelTab>
              <CloseButton aria-label="关闭">
                <Icon name="close" size={16} />
              </CloseButton>
            </PanelHeader>
            <PropBody>
              <PropTable>
                <thead>
                  <tr>
                    <th>属性名称</th>
                    <th>属性值</th>
                  </tr>
                </thead>
                <tbody>
                  <SectionRow>
                    <td colSpan={2}>
                      <Caret size={8} />
                      <span>基础属性</span>
                    </td>
                  </SectionRow>
                  {props.map(([name, value], i) => (
                    <PropRow key={name}>
                      <td>
                        <label htmlFor={`prop${i}`}>{name}</label>
                      </td>
                      <td>
                        <input id={`prop${i}`} defaultValue={value} />
                      </td>
                    </PropRow>
                  ))}
                </tbody>
              </PropTable>
              <Thumb $top={16} $height={30} />
            </PropBody>
          </PropPanel>
        </SideColumn>

        <Canvas>
          <Plan />
          <Handle aria-label="收起">
            <svg width="20" height="76" viewBox="0 0 20 76" aria-hidden="true">
              <path d="M0 0l16 4q4 1 4 4v58q0 3-4 4L0 76z" fill="#4b4b4b" />
              <path d="M12 34l-4 4 4 4" stroke="#aaa" fill="none" />
            </svg>
          </Handle>
        </Canvas>
      </Main>
    </Page>
  );
};

export default App;

const GlobalStyle = createGlobalStyle`
  * { box-sizing: border-box; }
  body { margin: 0; background: #fff; }
  body, button, input, select, table {
    font-family: "Noto Sans CJK SC", "Noto Sans", sans-serif;
    font-size: 15px;
    line-height: 20px;
    color: #444;
  }
  button { border: 0; padding: 0; background: none; cursor: pointer; }
  input { min-width: 0; border: 0; outline: none; background: none; }
`;

const IconSvg = styled.svg`
  flex: none;
`;
const Page = styled.div`
  height: 100vh;
  overflow: hidden;
  display: flex;
  flex-direction: column;
`;
const QuickStrip = styled.div`
  flex: none;
  height: 8px;
  display: flex;
  align-items: flex-start;
`;
const TabRow = styled.header`
  flex: none;
  height: 36px;
  display: flex;
  justify-content: space-between;
  border-bottom: 1px solid #ececec;
`;
const TabList = styled.nav`
  display: flex;
  gap: 23px;
  padding-left: 2px;
`;
const TabButton = styled.button`
  height: 36px;
  padding: 8px 4px 0;
  font-size: 16px;
  white-space: nowrap;
  font-weight: ${(p) => (p.$active ? 700 : 400)};
  color: ${(p) => (p.$active ? "#1677f0" : "#444")};
  border-bottom: 2px solid ${(p) => (p.$active ? "#1677f0" : "transparent")};
`;
const TopTools = styled.div`
  display: flex;
  align-items: center;
  gap: 10px;
  padding: 10px 10px 0 0;
`;
const HelpSearch = styled.div`
  width: 389px;
  height: 20px;
  margin-right: 2px;
  padding: 0 8px 0 3px;
  display: flex;
  align-items: center;
  border: 1px solid #e2e2e2;
  border-radius: 2px;
  input {
    flex: 1;
    padding: 0;
    height: 18px;
    color: #222;
  }
`;
const PlainButton = styled.button`
  display: flex;
`;
const Ribbon = styled.div`
  flex: none;
  display: flex;
  padding-top: 3px;
  height: 123px;
  border-bottom: 1px solid #dcdcdc;
`;
const GroupLabel = styled.div`
  height: 27px;
  padding-top: ${(p) => (p.$menu ? 2 : 6)}px;
  margin-left: -11px;
  display: flex;
  align-items: center;
  justify-content: center;
  gap: 6px;
  white-space: nowrap;
`;
const Group = styled.section`
  flex: none;
  height: 115px;
  padding: 1px 0 0 11px;
  border-right: 1px solid #e2e2e2;
  display: flex;
  flex-direction: column;
`;
const FirstGroup = styled(Group)`
  margin-left: -12px;
  padding-left: 0;
  ${GroupLabel} {
    margin-left: 0;
  }
`;
const GroupRow = styled.div`
  display: flex;
  gap: 7px;
`;
const ToolGrid = styled.div`
  display: grid;
  grid-template-columns: ${(p) => p.$cols};
  grid-template-rows: repeat(3, 29px);
  grid-auto-flow: column;
  align-items: center;
  justify-items: start;
`;
const ToolButton = styled.button`
  display: flex;
  align-items: center;
  gap: 4px;
  white-space: nowrap;
  &:disabled {
    color: #bcbcbc;
  }
`;
const SelectButton = styled.button`
  width: 49px;
  height: 85px;
  margin-top: 3px;
  margin-bottom: -1px;
  border-radius: 4px;
  background: #c2d8ef;
  display: flex;
  flex-direction: column;
  align-items: center;
  gap: 11px;
  padding-top: 1px;
`;
const LayoutButton = styled.button`
  width: 76px;
  height: 87px;
  margin: 0 18px 0 -11px;
  padding-top: 3px;
  display: flex;
  flex-direction: column;
  align-items: center;
  gap: 7px;
`;
const TipAnchor = styled.div`
  position: relative;
`;
const HoverButton = styled.button`
  display: flex;
  margin: 0 -3px;
  padding: 3px;
  border-radius: 3px;
  background: #d9e9fb;
`;
const Tooltip = styled.div`
  position: absolute;
  z-index: 5;
  top: 87px;
  left: -3px;
  width: 224px;
  height: 123px;
  padding: 6px 8px 0 8px;
  background: #fff;
  border: 1px solid #c9c9c9;
  border-radius: 4px;
  box-shadow: 0 0 4px rgba(0, 0, 0, 0.3);
  strong {
    color: #2c2c2c;
  }
  p {
    margin: 5px 0 0;
    padding-bottom: 9px;
    line-height: 21px;
    border-bottom: 1px solid #a8a8a8;
  }
`;
const SelectorBar = styled.div`
  flex: none;
  height: 39px;
  margin-left: -22px;
  display: flex;
  background: #f1f1f1;
  border-bottom: 1px solid #d6d6d6;
`;
const SelectBox = styled.div`
  position: relative;
  width: 122px;
  border-right: 1px solid #dedede;
  select {
    width: 100%;
    height: 38px;
    padding: 0 20px 0 4px;
    border: 0;
    background: none;
    appearance: none;
  }
  svg {
    position: absolute;
    right: 6px;
    top: 16px;
    pointer-events: none;
  }
`;
const Main = styled.main`
  flex: 1;
  min-height: 0;
  display: flex;
`;
const NavPanel = styled.aside`
  flex: none;
  width: 206px;
  border-right: 1px solid #dfdfdf;
  display: flex;
  flex-direction: column;
`;
const PanelHeader = styled.div`
  flex: none;
  height: 35px;
  display: flex;
  align-items: center;
  background: #eeeef0;
`;
const NavTitle = styled.h2`
  margin: 0 0 0 10px;
  font-size: 15px;
  font-weight: 400;
`;
const CloseButton = styled.button`
  display: flex;
  margin-left: auto;
  margin-right: 9px;
`;
const NavBody = styled.div`
  flex: 1;
  min-height: 0;
  display: flex;
  justify-content: space-between;
  padding-right: 6px;
  overflow: hidden;
`;
const NavList = styled.div`
  width: 190px;
`;
const NavItem = styled.button`
  width: 100%;
  height: 51px;
  display: flex;
  align-items: center;
  gap: 15px;
  background: ${(p) => (p.$active ? "#e9ebf0" : "#f5f7f9")};
  color: ${(p) => (p.$active ? "#4a86e8" : "#444")};
`;
const SubList = styled.div`
  padding-top: 1px;
`;
const SubItem = styled.a`
  display: block;
  height: 34px;
  padding-left: 5px;
  line-height: 34px;
  text-decoration: none;
  white-space: nowrap;
  color: ${(p) => (p.$active ? "#1a86f5" : "#444")};
`;
const Thumb = styled.div`
  flex: none;
  width: 5px;
  height: ${(p) => p.$height}px;
  margin-top: ${(p) => p.$top}px;
  border-radius: 3px;
  background: #e9e9e9;
`;
const SideColumn = styled.div`
  flex: none;
  width: 256px;
  margin: 0 5px 0 4px;
  display: flex;
  flex-direction: column;
  gap: 5px;
`;
const MemberPanel = styled.section`
  flex: none;
  height: 303px;
  border: 1px solid #dfdfdf;
  border-top: 0;
  display: flex;
  flex-direction: column;
`;
const Grip = styled.span`
  width: 9px;
  height: 20px;
  margin: 0 13px 0 7px;
  background: radial-gradient(circle at 2px 2px, #8a8a8a 1px, transparent 1.500px) 0 0 / 5px 5px;
`;
const PanelTab = styled.button`
  height: 100%;
  width: 83px;
  background: ${(p) => (p.$active ? "#fff" : "transparent")};
  color: ${(p) => (p.$active ? "#1f7ef0" : "#444")};
`;
const ActionRow = styled.div`
  display: flex;
  gap: 11px;
  padding: 9px 12px 9px 13px;
`;
const SplitButton = styled.div`
  display: flex;
  gap: 1px;
`;
const ActionButton = styled.button`
  width: 39px;
  height: 31px;
  display: flex;
  align-items: center;
  justify-content: center;
  border-radius: 3px;
  background: #f4f4f4;
`;
const ArrowButton = styled(ActionButton)`
  width: 15px;
`;
const MoreButton = styled(ActionButton)`
  width: 32px;
  margin-left: auto;
  border: 1px solid #dedede;
  border-radius: 4px;
`;
const MemberSearch = styled.div`
  height: 31px;
  margin: 0 11px 0 10px;
  padding: 0 13px 0 14px;
  display: flex;
  align-items: center;
  border-radius: 16px;
  background: #f3f3f3;
  input {
    flex: 1;
    padding: 0;
  }
  input::placeholder {
    color: #7d7d7d;
  }
`;
const Tree = styled.div`
  flex: 1;
  min-height: 0;
  overflow: hidden;
  padding: 12px 9px 0 7px;
  display: flex;
  justify-content: space-between;
`;
const TreeBody = styled.div`
  display: flex;
  flex-direction: column;
  gap: 4px;
`;
const TreeHead = styled.div`
  height: 27px;
  display: flex;
  align-items: center;
  gap: 4px;
`;
const TreeItem = styled.button`
  flex: none;
  width: 80px;
  height: 25px;
  margin-left: 18px;
  padding-left: 5px;
  text-align: left;
  border-radius: 3px;
  background: ${(p) => (p.$active ? "#c2d8f1" : "transparent")};
  span {
    margin-left: 5px;
  }
`;
const PropPanel = styled.section`
  flex: 1;
  min-height: 0;
  border: 1px solid #dfdfdf;
  border-bottom: 0;
  overflow: hidden;
`;
const PropBody = styled.div`
  display: flex;
  justify-content: space-between;
  padding: 2px 5px 0 0;
`;
const PropTable = styled.table`
  width: 239px;
  table-layout: fixed;
  border-collapse: separate;
  border-spacing: 0;
  th {
    height: 29px;
    padding: 0;
    font-weight: 400;
    background: #ededed;
    border-bottom: 1px solid #d2d2d2;
  }
  th:first-child {
    width: 124px;
    border-right: 1px solid #d2d2d2;
  }
`;
const SectionRow = styled.tr`
  td {
    height: 29px;
    padding: 0 0 0 10px;
    background: #ebebeb;
  }
  span {
    margin-left: 7px;
  }
`;
const PropRow = styled.tr`
  td {
    height: 31px;
    padding: 0;
  }
  label {
    padding-left: 18px;
    white-space: nowrap;
    color: #2059f5;
  }
  input {
    display: block;
    width: 100%;
    height: 25px;
    padding: 0 3px;
    border: 1px solid #dedede;
    border-right: 0;
  }
`;
const Canvas = styled.div`
  position: relative;
  flex: 1;
  min-width: 0;
  background: #000;
  overflow: hidden;
`;
const PlanSvg = styled.svg`
  display: block;
  width: 100%;
  height: 100%;
`;
const Handle = styled.button`
  position: absolute;
  left: 0;
  top: 243px;
  svg {
    display: block;
  }
`;
